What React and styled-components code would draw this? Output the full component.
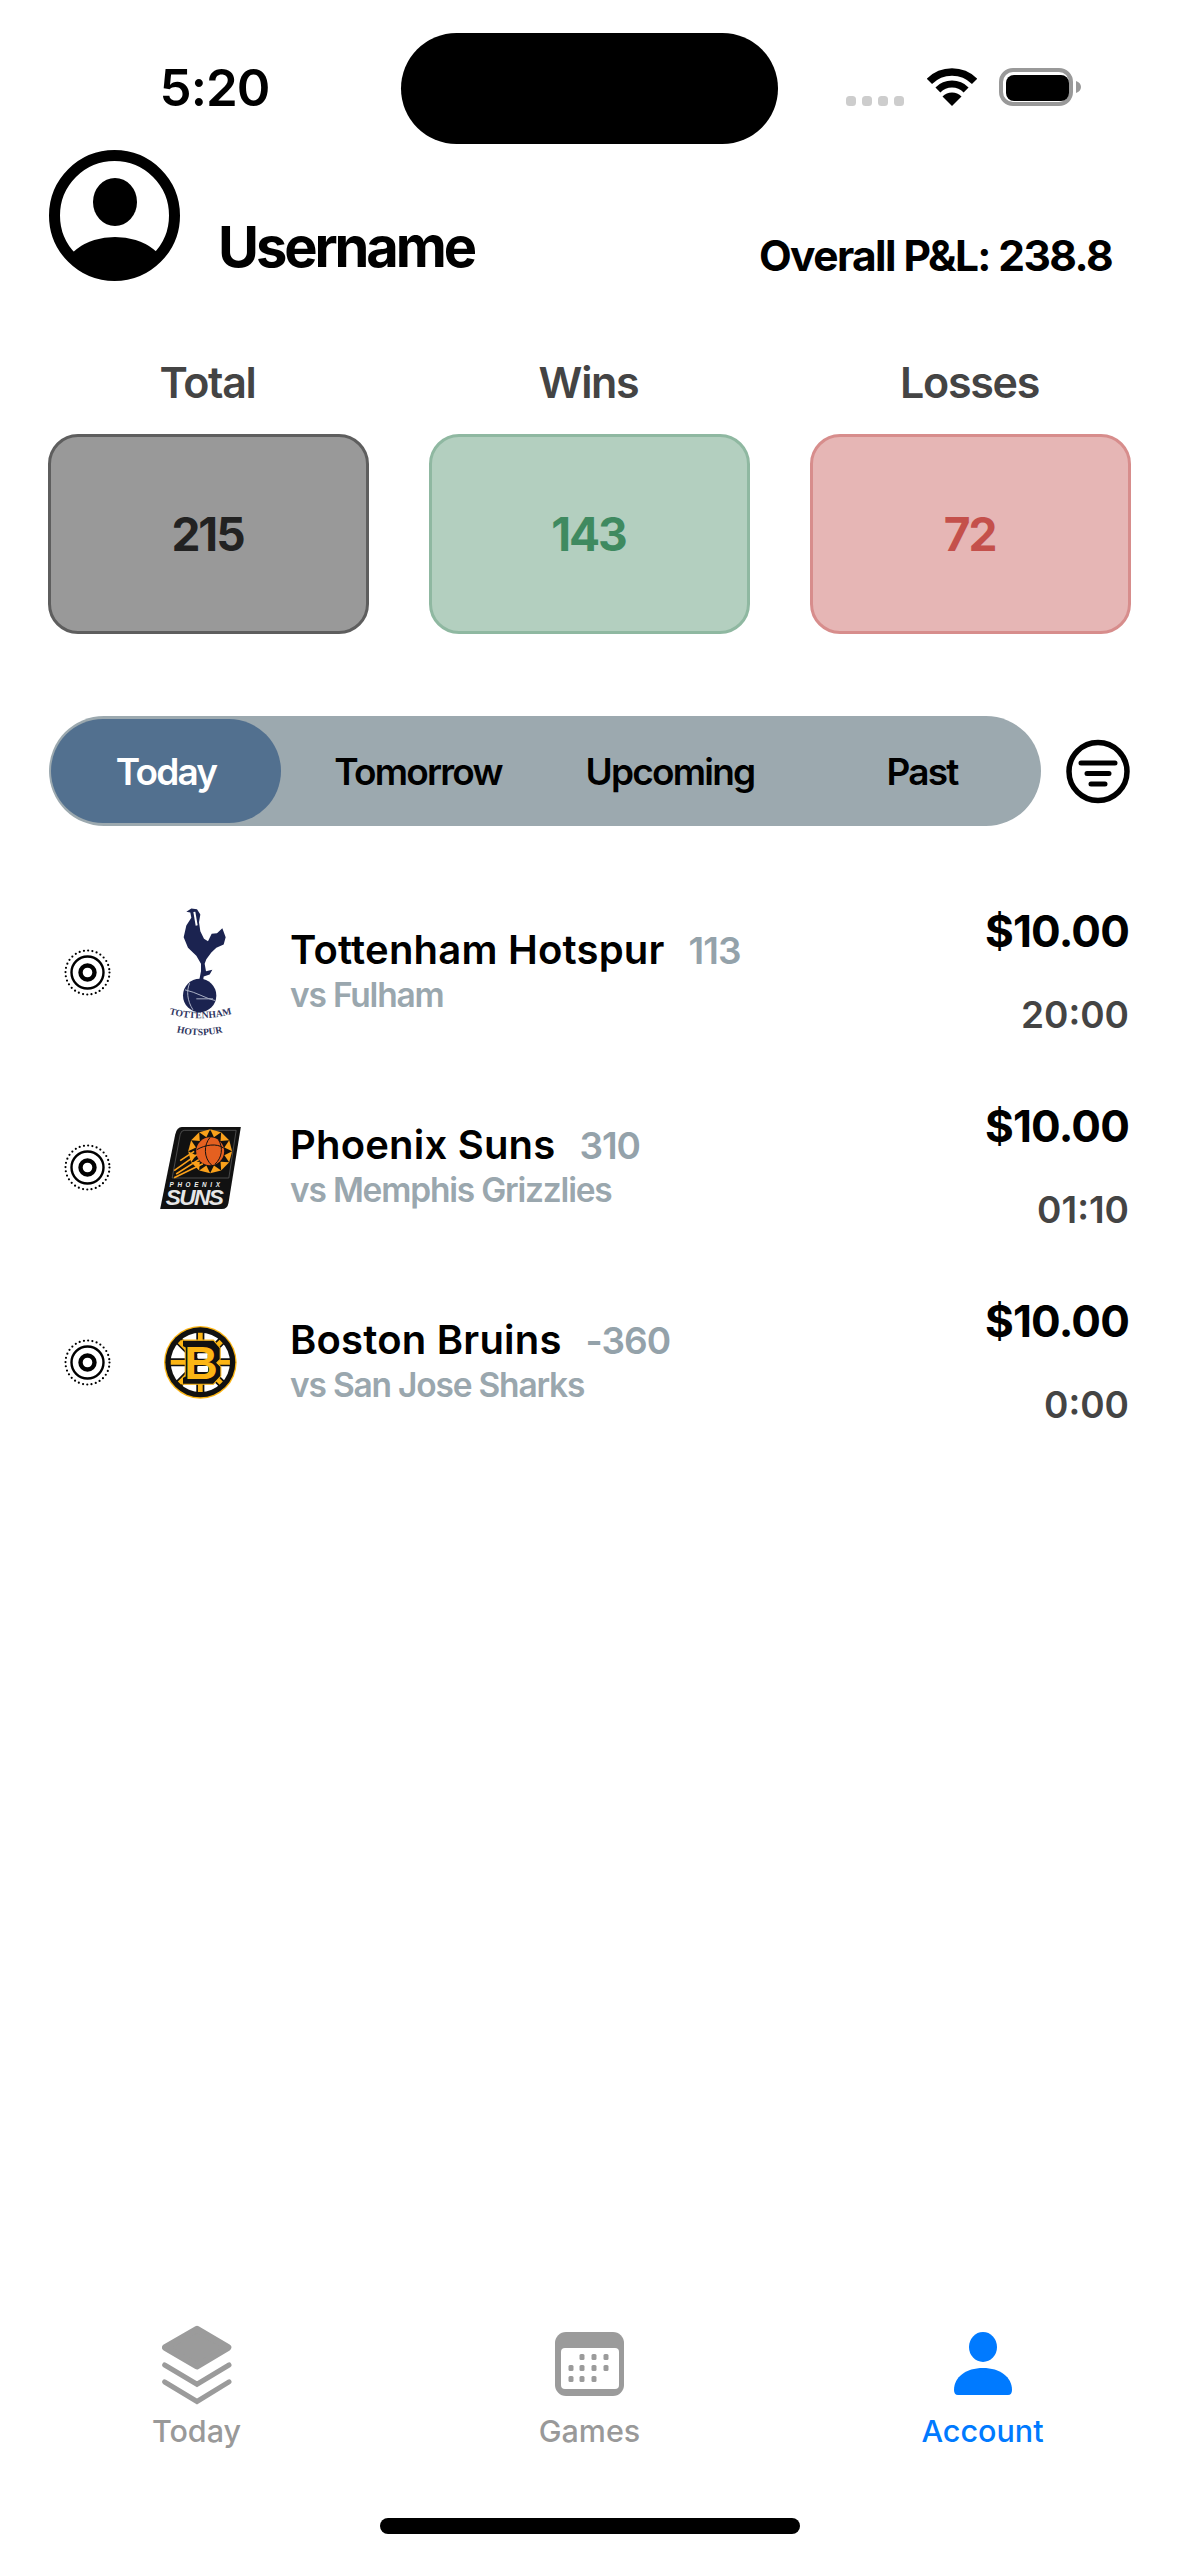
import React from "react";
import styled, { createGlobalStyle } from "styled-components";

const Global = createGlobalStyle`
  html, body { margin: 0; padding: 0; background: #fff; }
  body { font-family: Inter, "Liberation Sans", sans-serif; }
  * { box-sizing: border-box; }
`;

const Page = styled.div`
  width: 1179px;
  height: 2556px;
  background: #fff;
  display: flex;
  flex-direction: column;
  overflow: hidden;
`;

const StatusBar = styled.div`
  height: 150px;
  flex: none;
  display: grid;
  grid-template-columns: 401px 377px 1fr;
  padding-top: 33px;
  align-items: start;
`;
const Time = styled.div`
  font-size: 51px;
  line-height: 62px;
  font-weight: 600;
  color: #000;
  text-align: center;
  padding: 24px 0 0 28px;
  letter-spacing: -1px;
`;
const Island = styled.div`
  height: 111px;
  border-radius: 56px;
  background: #000;
`;
const StatusIcons = styled.div`
  display: flex;
  align-items: flex-end;
  padding: 35px 0 0 68px;
`;
const SignalDots = styled.div`
  display: flex;
  gap: 6px;
  margin: 0 23px 0 0;
`;
const SignalDot = styled.span`
  width: 10px;
  height: 10px;
  border-radius: 3.5px;
  background: #cdcdcd;
`;
const BatteryIcon = styled.svg`
  margin-left: 22px;
`;

const Profile = styled.div`
  display: flex;
  align-items: center;
  padding: 0 67px 0 49px;
  height: 131px;
  flex: none;
`;
const Username = styled.div`
  margin-left: 38px;
  font-size: 56px;
  font-weight: 700;
  color: #000;
  letter-spacing: -3.1px;
  padding-top: 62px;
`;
const Overall = styled.div`
  margin-left: auto;
  font-size: 42.5px;
  font-weight: 700;
  color: #000;
  letter-spacing: -1.6px;
  padding-top: 80px;
`;

const Stats = styled.div`
  display: grid;
  grid-template-columns: repeat(3, 321px);
  gap: 0 60px;
  padding: 0 48px;
  margin-top: 76px;
  flex: none;
`;
const StatLabel = styled.div`
  font-size: 43px;
  line-height: 50px;
  font-weight: 600;
  color: #444;
  text-align: center;
  letter-spacing: -1.3px;
  margin-bottom: 27px;
  padding-right: 2px;
`;
const StatBox = styled.div`
  height: 200px;
  border-radius: 30px;
  border: 3px solid ${(p) => p.$line};
  background: ${(p) => p.$fill};
  color: ${(p) => p.$ink};
  display: flex;
  align-items: center;
  justify-content: center;
  font-size: 46px;
  font-weight: 700;
  letter-spacing: -2px;
  padding-right: 2px;
`;

const TabRow = styled.div`
  display: flex;
  align-items: center;
  justify-content: space-between;
  padding: 0 49px;
  margin-top: 82px;
  flex: none;
`;
const Tabs = styled.div`
  width: 992px;
  height: 110px;
  border-radius: 55px;
  background: #9ca9af;
  display: grid;
  grid-template-columns: repeat(4, 230px);
  gap: 22px;
  padding: 3px 2px;
`;
const Tab = styled.div`
  border-radius: 52px;
  display: flex;
  align-items: center;
  justify-content: center;
  font-size: 37px;
  font-weight: 600;
  letter-spacing: -1.8px;
  color: ${(p) => (p.$active ? "#fff" : "#000")};
  background: ${(p) => (p.$active ? "#52708f" : "transparent")};
`;

const List = styled.div`
  margin-top: 49px;
  flex: none;
`;
const Row = styled.div`
  height: 195px;
  display: flex;
  align-items: center;
  padding: 0 50px 0 64px;
`;
const LogoCell = styled.div`
  width: 81px;
  margin: 0 49px 0 49px;
  display: flex;
  justify-content: center;
  flex: none;
`;
const Info = styled.div`
  flex: 1;
  display: flex;
  flex-direction: column;
  padding-bottom: 2px;
`;
const NameLine = styled.div`
  display: flex;
  align-items: baseline;
  line-height: 46px;
`;
const TeamName = styled.span`
  font-size: 40px;
  font-weight: 600;
  color: #000;
  letter-spacing: 0.2px;
`;
const Odds = styled.span`
  margin-left: 24px;
  font-size: 37px;
  font-weight: 600;
  color: #94a2aa;
  letter-spacing: -1px;
`;
const Opponent = styled.div`
  font-size: 33.5px;
  line-height: 42px;
  font-weight: 600;
  color: #9aa7ae;
  letter-spacing: -1.2px;
`;
const RightCol = styled.div`
  display: flex;
  flex-direction: column;
  align-items: flex-end;
  gap: 34px;
  padding-bottom: 4px;
`;
const Price = styled.div`
  font-size: 44px;
  line-height: 54px;
  font-weight: 700;
  color: #000;
  letter-spacing: -0.8px;
`;
const Clock = styled.div`
  font-size: 37px;
  line-height: 46px;
  font-weight: 600;
  color: #444;
`;

const Spacer = styled.div`
  flex: 1;
`;

const TabBar = styled.div`
  display: grid;
  grid-template-columns: repeat(3, 393px);
  flex: none;
  height: 125px;
`;
const BarItem = styled.div`
  display: flex;
  flex-direction: column;
  align-items: center;
  justify-content: flex-end;
  color: ${(p) => (p.$active ? "#007aff" : "#999")};
  font-size: 30.5px;
  line-height: 38px;
  font-weight: 500;
  gap: 16px;
  height: 125px;
`;
const IconSlot = styled.div`
  height: 78px;
  display: flex;
  align-items: flex-end;
`;
const SunkIcon = styled.div`
  display: flex;
  margin-bottom: -9px;
`;

const HomeWrap = styled.div`
  flex: none;
  display: flex;
  justify-content: center;
  padding: 68px 0 22px;
`;
const HomeBar = styled.div`
  width: 420px;
  height: 16px;
  border-radius: 8px;
  background: #000;
`;

const Wifi = () => (
  <svg width="50" height="38" viewBox="0 0 50 38">
    <path d="M2.4 13.4A32 32 0 0 1 47.6 13.4" fill="none" stroke="#000" strokeWidth="7.5" />
    <path d="M10.9 21.9A20 20 0 0 1 39.1 21.9" fill="none" stroke="#000" strokeWidth="7" />
    <path d="M25 38L15.5 28.5A13.5 13.5 0 0 1 34.5 28.5Z" fill="#000" />
  </svg>
);

const Battery = () => (
  <BatteryIcon width="82" height="38" viewBox="0 0 82 38">
    <rect x="2" y="2" width="70" height="34" rx="12" fill="none" stroke="#999" strokeWidth="4" />
    <rect x="7" y="7" width="63" height="26" rx="8" fill="#000" />
    <path d="M77 13C80 14 82 16 82 19C82 22 80 24 77 25Z" fill="#999" />
  </BatteryIcon>
);

const Avatar = () => (
  <svg width="131" height="131" viewBox="0 0 131 131">
    <defs>
      <clipPath id="avatarClip">
        <circle cx="65.5" cy="65.5" r="60" />
      </clipPath>
    </defs>
    <circle cx="65.5" cy="65.5" r="60" fill="none" stroke="#000" strokeWidth="11" />
    <ellipse cx="66" cy="52" rx="22" ry="24" fill="#000" />
    <ellipse cx="66" cy="128" rx="54" ry="41" fill="#000" clipPath="url(#avatarClip)" />
  </svg>
);

const FilterIcon = () => (
  <svg width="64" height="65" viewBox="0 0 64 65">
    <circle cx="32" cy="32.5" r="29" fill="none" stroke="#000" strokeWidth="5.5" />
    <path d="M15 24H49M21 34.5H43M25 45H39" fill="none" stroke="#000" strokeWidth="5" strokeLinecap="round" />
  </svg>
);

const Radio = () => (
  <svg width="47" height="47" viewBox="0 0 47 47">
    <circle cx="23.5" cy="23.5" r="22" fill="none" stroke="#000" strokeWidth="2.2" strokeDasharray="0 4.32" strokeLinecap="round" />
    <circle cx="23.5" cy="23.5" r="16" fill="none" stroke="#000" strokeWidth="2.4" />
    <circle cx="23.5" cy="23.5" r="7" fill="none" stroke="#000" strokeWidth="4.4" />
  </svg>
);

const SpursText = styled.text`
  font-family: "Liberation Serif", serif;
  font-size: 29px;
  font-weight: 700;
  fill: #2f3560;
`;

const SpursLogo = () => (
  <svg width="65" height="131" viewBox="385 70 195 392">
    <path
      d="M440 84L455 74L472 76L482 92L478 115L482 142L493 165L505 172L516 150L532 148L548 133L558 160L552 182L530 192L515 206L500 226L495 240L499 262L518 258L510 272L492 278L490 292L478 292L484 262L484 240L470 216L445 192L432 160L440 125L455 102L452 86Z"
      fill="#1b2350"
    />
    <path d="M464 84L471 125" stroke="#fff" strokeWidth="6" fill="none" />
    <circle cx="480" cy="335" r="50" fill="#1b2350" />
    <path d="M436 318C470 325 500 345 526 350M450 298C440 320 442 350 460 378M470 345H520" stroke="#aab0c4" strokeWidth="3" fill="none" />
    <defs>
      <path id="spursArc1" d="M370 385Q480 422 595 385" />
      <path id="spursArc2" d="M380 436Q480 472 580 436" />
    </defs>
    <SpursText>
      <textPath href="#spursArc1" startOffset="50%" textAnchor="middle">TOTTENHAM</textPath>
    </SpursText>
    <SpursText>
      <textPath href="#spursArc2" startOffset="50%" textAnchor="middle">HOTSPUR</textPath>
    </SpursText>
  </svg>
);

const SunsSmall = styled.text`
  font-family: "Liberation Sans", sans-serif;
  font-size: 19px;
  font-weight: 700;
  font-style: italic;
  letter-spacing: 11px;
  fill: #eee;
`;
const SunsBig = styled.text`
  font-family: "Liberation Sans", sans-serif;
  font-size: 68px;
  font-weight: 700;
  font-style: italic;
  letter-spacing: -5px;
  fill: #e6e6e6;
`;

const SunsLogo = () => {
  const rays = [];
  for (let i = 0; i < 12; i++) {
    const a = (i * Math.PI) / 6;
    const b = a + Math.PI / 12;
    const c = a + Math.PI / 6;
    const R = 66;
    const r = 44;
    rays.push(
      `${510 + R * Math.cos(a)},${175 + R * Math.sin(a)} ${510 + r * Math.cos(b)},${175 + r * Math.sin(b)} ${510 + R * Math.cos(c)},${175 + R * Math.sin(c)}`
    );
  }
  return (
    <svg width="81" height="82" viewBox="360 102 242 246">
      <path d="M425 102H602L565 330Q562 348 545 348H360L405 125Q410 102 425 102Z" fill="#111" />
      <path d="M432 112H588L566 255H396L420 125Q423 112 432 112Z" fill="none" stroke="#666" strokeWidth="2" />
      {rays.map((p) => (
        <polygon key={p} points={p} fill="#f9a01b" />
      ))}
      <path d="M470 185L402 233M476 200L408 243M488 212L402 254M462 175L420 203" stroke="#f9a01b" strokeWidth="5" fill="none" />
      <circle cx="510" cy="175" r="42" fill="#e56020" />
      <path d="M470 170C495 155 530 150 550 165M510 133C490 155 490 195 515 217M535 140C550 165 545 195 525 213" stroke="#111" strokeWidth="3" fill="none" />
      <SunsSmall x="388" y="283">PHOENIX</SunsSmall>
      <SunsBig x="377" y="336">SUNS</SunsBig>
    </svg>
  );
};

const BruinsB = styled.text`
  font-family: "Liberation Sans", sans-serif;
  font-size: 138px;
  font-weight: 700;
  text-anchor: middle;
  fill: #fcb514;
`;

const BruinsLogo = () => (
  <svg width="73" height="73" viewBox="373 703 217 217">
    <circle cx="481" cy="811" r="108" fill="#fcb514" />
    <circle cx="481" cy="811" r="104" fill="#111" />
    <circle cx="481" cy="811" r="88" fill="#fff" />
    <path d="M481 715V907M385 811H577M413 743L549 879M549 743L413 879" stroke="#111" strokeWidth="24" />
    <path d="M481 723V899M393 811H569M419 749L543 873M543 749L419 873" stroke="#fcb514" strokeWidth="14" />
    <path d="M428 745H520L540 768V802L530 812L542 824V852L520 876H428V856L436 852V768L428 764Z" fill="#111" stroke="#fcb514" strokeWidth="3" />
    <BruinsB x="483" y="860">B</BruinsB>
    <rect x="472" y="784" width="30" height="16" rx="3" fill="#fff" />
    <rect x="472" y="822" width="32" height="18" rx="3" fill="#fff" />
  </svg>
);

const StackIcon = () => (
  <svg width="70" height="80" viewBox="92 45 210 232" preserveAspectRatio="none">
    <polygon points="197,57 290,110 197,164 102,110" fill="#9b9b9b" stroke="#9b9b9b" strokeWidth="20" strokeLinejoin="round" />
    <polyline points="100,161 197,217 293,161" fill="none" stroke="#9b9b9b" strokeWidth="15" strokeLinecap="round" />
    <polyline points="100,210 197,267 293,210" fill="none" stroke="#9b9b9b" strokeWidth="15" strokeLinecap="round" />
  </svg>
);

const CalendarIcon = () => {
  const dots = [
    [27, 25], [39, 25], [51, 25],
    [16, 36], [27, 36], [39, 36], [51, 36],
    [16, 47], [27, 47], [39, 47],
  ];
  return (
    <svg width="69" height="64" viewBox="0 0 69 64">
      <rect width="69" height="64" rx="11" fill="#9b9b9b" />
      <rect x="6" y="16" width="58" height="41" rx="4" fill="#fff" />
      {dots.map(([x, y]) => (
        <rect key={`${x}-${y}`} x={x - 2.5} y={y - 3} width="5" height="6" rx="1.5" fill="#9b9b9b" />
      ))}
    </svg>
  );
};

const PersonIcon = () => (
  <svg width="58" height="64" viewBox="0 0 58 64">
    <ellipse cx="29" cy="15" rx="14" ry="15" fill="#007aff" />
    <path d="M0 58C0 45 12 36 29 36C46 36 58 45 58 58Q58 63 54 63H4Q0 63 0 58Z" fill="#007aff" />
  </svg>
);

const stats = [
  { label: "Total", value: "215", fill: "#999999", line: "#5e5e5e", ink: "#222" },
  { label: "Wins", value: "143", fill: "#b3cfbf", line: "#8fb8a1", ink: "#3f8a60" },
  { label: "Losses", value: "72", fill: "#e6b6b5", line: "#d78d8c", ink: "#c4504b" },
];

const games = [
  { team: "Tottenham Hotspur", odds: "113", opp: "vs Fulham", time: "20:00", Logo: SpursLogo },
  { team: "Phoenix Suns", odds: "310", opp: "vs Memphis Grizzlies", time: "01:10", Logo: SunsLogo },
  { team: "Boston Bruins", odds: "-360", opp: "vs San Jose Sharks", time: "0:00", Logo: BruinsLogo },
];

export default function App() {
  return (
    <Page>
      <Global />
      <StatusBar>
        <Time>5:20</Time>
        <Island />
        <StatusIcons>
          <SignalDots>
            <SignalDot /><SignalDot /><SignalDot /><SignalDot />
          </SignalDots>
          <Wifi />
          <Battery />
        </StatusIcons>
      </StatusBar>
      <Profile>
        <Avatar />
        <Username>Username</Username>
        <Overall>Overall P&amp;L: 238.8</Overall>
      </Profile>
      <Stats>
        {stats.map((s) => (
          <div key={s.label}>
            <StatLabel>{s.label}</StatLabel>
            <StatBox $fill={s.fill} $line={s.line} $ink={s.ink}>{s.value}</StatBox>
          </div>
        ))}
      </Stats>
      <TabRow>
        <Tabs>
          <Tab $active>Today</Tab>
          <Tab>Tomorrow</Tab>
          <Tab>Upcoming</Tab>
          <Tab>Past</Tab>
        </Tabs>
        <FilterIcon />
      </TabRow>
      <List>
        {games.map(({ team, odds, opp, time, Logo }) => (
          <Row key={team}>
            <Radio />
            <LogoCell><Logo /></LogoCell>
            <Info>
              <NameLine>
                <TeamName>{team}</TeamName>
                <Odds>{odds}</Odds>
              </NameLine>
              <Opponent>{opp}</Opponent>
            </Info>
            <RightCol>
              <Price>$10.00</Price>
              <Clock>{time}</Clock>
            </RightCol>
          </Row>
        ))}
      </List>
      <Spacer />
      <TabBar>
        <BarItem>
          <IconSlot><SunkIcon><StackIcon /></SunkIcon></IconSlot>
          Today
        </BarItem>
        <BarItem>
          <IconSlot><CalendarIcon /></IconSlot>
          Games
        </BarItem>
        <BarItem $active>
          <IconSlot><PersonIcon /></IconSlot>
          Account
        </BarItem>
      </TabBar>
      <HomeWrap><HomeBar /></HomeWrap>
    </Page>
  );
}
